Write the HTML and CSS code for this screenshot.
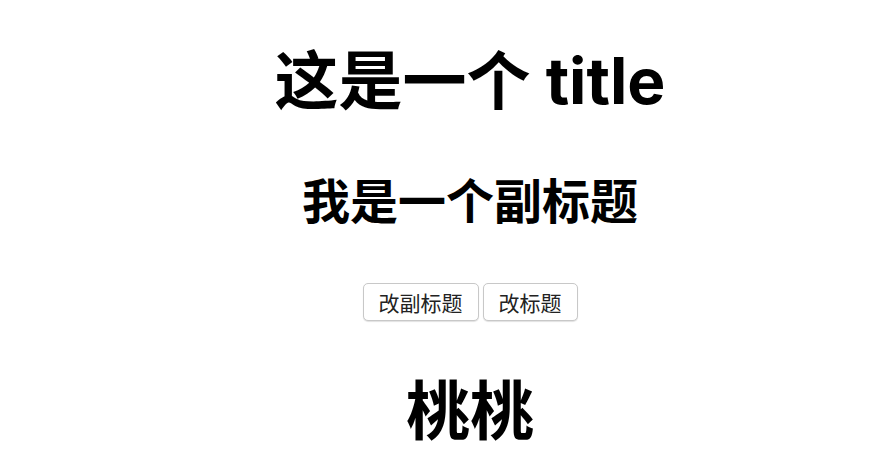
FILE: index.html
```html
<!DOCTYPE html>
<html lang="zh">
<head>
<meta charset="utf-8">
<link rel="stylesheet" href="styles.css">
</head>
<body>
<div class="page">
  <h1 class="title">这是一个 title</h1>
  <h2 class="subtitle">我是一个副标题</h2>
  <div class="actions">
    <button class="btn">改副标题</button>
    <button class="btn">改标题</button>
  </div>
  <div class="peach">桃桃</div>
</div>
</body>
</html>
```
FILE: styles.css
```css
html, body {
  margin: 0;
  padding: 0;
  background: #ffffff;
}
.page {
  padding: 42px 0 0 46px;
  display: flex;
  flex-direction: column;
  align-items: center;
  font-family: "Inter", "Noto Sans CJK SC", sans-serif;
  color: #000;
}
.title {
  margin: 0;
  font-size: 64px;
  line-height: 77px;
  font-weight: 700;
}
.subtitle {
  margin: 55px 0 0;
  font-family: "Liberation Sans", "Noto Sans CJK SC", sans-serif;
  font-size: 48px;
  line-height: 58px;
  font-weight: 700;
}
.actions {
  margin-top: 51px;
  display: flex;
  gap: 4px;
}
.btn {
  height: 38px;
  padding: 0 15px;
  font-family: "Noto Sans CJK SC", sans-serif;
  font-size: 21px;
  color: #222;
  background: #fff;
  border: 1px solid #c8c8c8;
  border-radius: 5px;
  box-shadow: 0 1px 1px rgba(0,0,0,0.12);
}
.peach {
  margin-top: 53px;
  font-family: "Liberation Sans", "Noto Sans CJK SC", sans-serif;
  font-size: 64px;
  line-height: 76px;
  font-weight: 700;
}
```
